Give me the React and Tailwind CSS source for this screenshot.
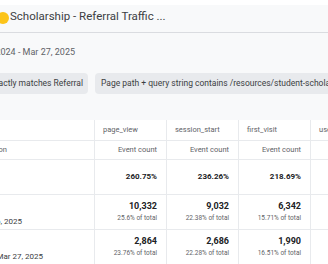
import React from 'react';

const cols = [
  { name: 'page_view', total: '260.75%', a: '10,332', ap: '25.6% of total', b: '2,864', bp: '23.76% of total' },
  { name: 'session_start', total: '236.26%', a: '9,032', ap: '22.38% of total', b: '2,686', bp: '22.28% of total' },
  { name: 'first_visit', total: '218.69%', a: '6,342', ap: '15.71% of total', b: '1,990', bp: '16.51% of total' },
  { name: 'user_engagement', total: '198.40%', a: '7,120', ap: '20.1% of total', b: '2,104', bp: '21.3% of total' },
];

function Tail({ width, children, className = '' }) {
  // right edge is fixed, the head of the text runs off the left side
  return (
    <div className={`flex justify-end shrink-0 ${className}`} style={{ width }}>
      <span className="whitespace-nowrap">{children}</span>
    </div>
  );
}

export default function App() {
  return (
    <div className="w-[328px] h-[264px] overflow-hidden bg-white font-['Roboto',sans-serif]">
      <div className="h-[5px] bg-white" />
      <div className="h-[28px] bg-[#f8f9fa] border-b border-[#dadce0] flex items-center pb-[3px]">
        <div className="w-[12px] h-[12px] rounded-full bg-[#fcc419] ml-[-3px] mt-[2px] shrink-0" />
        <span className="ml-[1px] text-[11.5px] text-[#3c4043] whitespace-nowrap">Scholarship - Referral Traffic ...</span>
      </div>

      <div className="h-[87px] bg-[#f8f9fa] pt-[13px]">
        <Tail width="75px" className="text-[9px] leading-[12px] text-[#5f6368]">
          Mar 28, 2024 - Mar 27, 2025
        </Tail>
        <div className="flex gap-[7px] mt-[15px] text-[8.5px] text-[#3c4043] whitespace-nowrap">
          <div className="ml-[-10px] w-[98px] h-[21px] rounded-[4px] bg-[#e8eaed] flex items-center justify-end pr-[5px] shrink-0">
            <span>Session source exactly matches Referral</span>
          </div>
          <div className="h-[21px] rounded-[4px] bg-[#e8eaed] flex items-center px-[6px] shrink-0">
            Page path + query string contains /resources/student-scholarships/
          </div>
        </div>
      </div>

      <div className="bg-white text-[7.5px] text-[#5f6368]">
        <div className="flex h-[21px] border-b border-[#e8eaed]">
          <div className="w-[94px] shrink-0" />
          {cols.map((c) => (
            <div key={c.name} className="w-[72px] shrink-0 border-l border-[#e8eaed] pl-[8px] flex items-center whitespace-nowrap">
              {c.name}
            </div>
          ))}
        </div>
        <div className="flex h-[19px] border-b border-[#e8eaed]">
          <Tail width="94px" className="pr-[87px] items-center">Region</Tail>
          {cols.map((c) => (
            <div key={c.name} className="w-[72px] shrink-0 border-l border-[#e8eaed] pr-[9px] flex items-center justify-end whitespace-nowrap">
              Event count
            </div>
          ))}
        </div>
        <div className="flex h-[35px] border-b border-[#e8eaed]">
          <div className="w-[94px] shrink-0" />
          {cols.map((c) => (
            <div key={c.name} className="w-[72px] shrink-0 border-l border-[#e8eaed] pr-[9px] flex items-center justify-end text-[8px] font-bold text-[#202124]">
              {c.total}
            </div>
          ))}
        </div>
        {[
          { date: 'Mar 27, 2023 - Mar 26, 2025', end: 22, v: 'a', p: 'ap' },
          { date: 'Mar 28, 2024 - Mar 27, 2025', end: 43, v: 'b', p: 'bp' },
        ].map((r) => (
          <div key={r.v} className="flex h-[35px] border-b border-[#e8eaed]">
            <div className="w-[94px] shrink-0 pt-[22px]">
              <Tail width={`${r.end}px`} className="text-[8px] leading-[10px] text-[#3c4043]">{r.date}</Tail>
            </div>
            {cols.map((c) => (
              <div key={c.name} className="w-[72px] shrink-0 border-l border-[#e8eaed] pr-[9px] pt-[5px] flex flex-col items-end whitespace-nowrap">
                <span className="text-[9px] leading-[12px] font-bold text-[#202124]">{c[r.v]}</span>
                <span className="text-[6.5px] leading-[9px] mt-[2px]">{c[r.p]}</span>
              </div>
            ))}
          </div>
        ))}
      </div>
    </div>
  );
}
